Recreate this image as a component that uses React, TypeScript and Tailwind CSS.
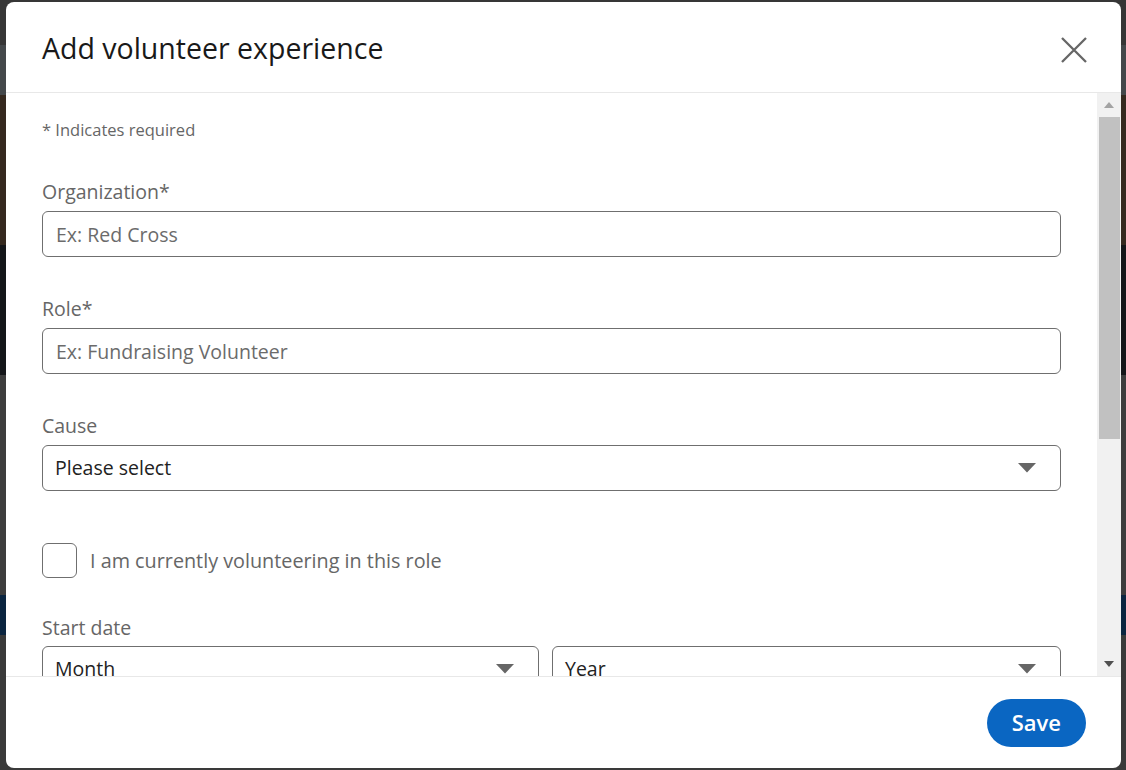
import React from "react";

const font = { fontFamily: '"Open Sans", "Noto Sans", sans-serif' };

function Caret({ className = "" }: { className?: string }) {
  return (
    <svg width="18" height="10" viewBox="0 0 18 10" className={className}>
      <path d="M0 0h18L9 9.5z" fill="#666" />
    </svg>
  );
}

function TextField({ label, placeholder }: { label: string; placeholder: string }) {
  return (
    <div className="flex flex-col">
      <label className="text-[19.5px] leading-[24px] text-[#666]">{label}</label>
      <input
        placeholder={placeholder}
        className="mt-[7px] h-[46px] w-full rounded-[6px] border border-[#6f6f6f] px-[13px] text-[19.5px] text-[#191919] outline-none placeholder:text-[#6b6b6b]"
      />
    </div>
  );
}

function SelectBox({ value, className = "" }: { value: string; className?: string }) {
  return (
    <div
      className={`flex h-[46px] items-center justify-between rounded-[6px] border border-[#6f6f6f] pl-[12px] pr-[24px] text-[19.5px] text-[#222] ${className}`}
    >
      <span>{value}</span>
      <Caret />
    </div>
  );
}

export default function App() {
  return (
    <div className="relative h-[770px] w-full overflow-hidden bg-[#383838]" style={font}>
      {/* dimmed page behind the dialog */}
      <div className="flex h-full flex-col">
        <div className="h-[45px] bg-[#363636]" />
        <div className="h-[50px] bg-[#44484b]" />
        <div className="h-[150px] bg-[#35291f]" />
        <div className="h-[130px] bg-[#141619]" />
        <div className="h-[220px] bg-[#3d3d3d]" />
        <div className="h-[40px] bg-[#0b2540]" />
        <div className="flex-1 bg-[#3a3a3a]" />
      </div>

      <div className="absolute left-[6px] top-[2px] flex h-[766px] w-[1115px] flex-col overflow-hidden rounded-[8px] bg-white">
        {/* header */}
        <div className="flex h-[91px] shrink-0 items-center justify-between border-b border-[#e8e8e8] pl-[36px] pr-[33px]">
          <h2 className="pt-[3px] text-[28.5px] font-normal text-[#191919]">Add volunteer experience</h2>
          <button className="mt-[5px] flex h-[28px] w-[28px] items-center justify-center">
            <svg width="26" height="26" viewBox="0 0 26 26">
              <path d="M1 1l24 24M25 1L1 25" stroke="#666" strokeWidth="2.3" />
            </svg>
          </button>
        </div>

        {/* body */}
        <div className="flex min-h-0 flex-1">
          <div className="min-w-0 flex-1 overflow-hidden pl-[36px] pr-[36px]">
            <p className="mt-[25px] text-[16.5px] leading-[24px] text-[#666]">* Indicates required</p>

            <div className="mt-[38px] flex flex-col gap-[40px]">
              <TextField label="Organization*" placeholder="Ex: Red Cross" />
              <TextField label="Role*" placeholder="Ex: Fundraising Volunteer" />
              <div className="flex flex-col">
                <label className="text-[19.5px] leading-[24px] text-[#666]">Cause</label>
                <SelectBox value="Please select" className="mt-[7px]" />
              </div>
            </div>

            <div className="mt-[52px] flex items-center gap-[13px]">
              <div className="h-[35px] w-[35px] rounded-[6px] border border-[#6f6f6f]" />
              <span className="text-[19.8px] text-[#666]">I am currently volunteering in this role</span>
            </div>

            <div className="mt-[38px] flex flex-col">
              <label className="text-[19.5px] leading-[24px] text-[#666]">Start date</label>
              <div className="mt-[6px] flex gap-[13px]">
                <SelectBox value="Month" className="w-[497px] shrink-0" />
                <SelectBox value="Year" className="flex-1" />
              </div>
            </div>
          </div>

          {/* scrollbar */}
          <div className="flex w-[24px] shrink-0 flex-col items-stretch bg-[#f1f1f1]">
            <div className="flex h-[24px] items-center justify-center">
              <svg width="10" height="6" viewBox="0 0 10 6"><path d="M0 6h10L5 0z" fill="#a3a3a3" /></svg>
            </div>
            <div className="ml-[2px] mr-[1px] h-[322px] bg-[#c1c1c1]" />
            <div className="flex-1" />
            <div className="flex h-[24px] items-center justify-center">
              <svg width="10" height="6" viewBox="0 0 10 6"><path d="M0 0h10L5 6z" fill="#505050" /></svg>
            </div>
          </div>
        </div>

        {/* footer */}
        <div className="flex h-[92px] shrink-0 items-center justify-end border-t border-[#e8e8e8] pr-[35px]">
          <button className="h-[48px] rounded-full bg-[#0a66c2] px-[25px] text-[22px] font-semibold text-white">
            Save
          </button>
        </div>
      </div>
    </div>
  );
}
